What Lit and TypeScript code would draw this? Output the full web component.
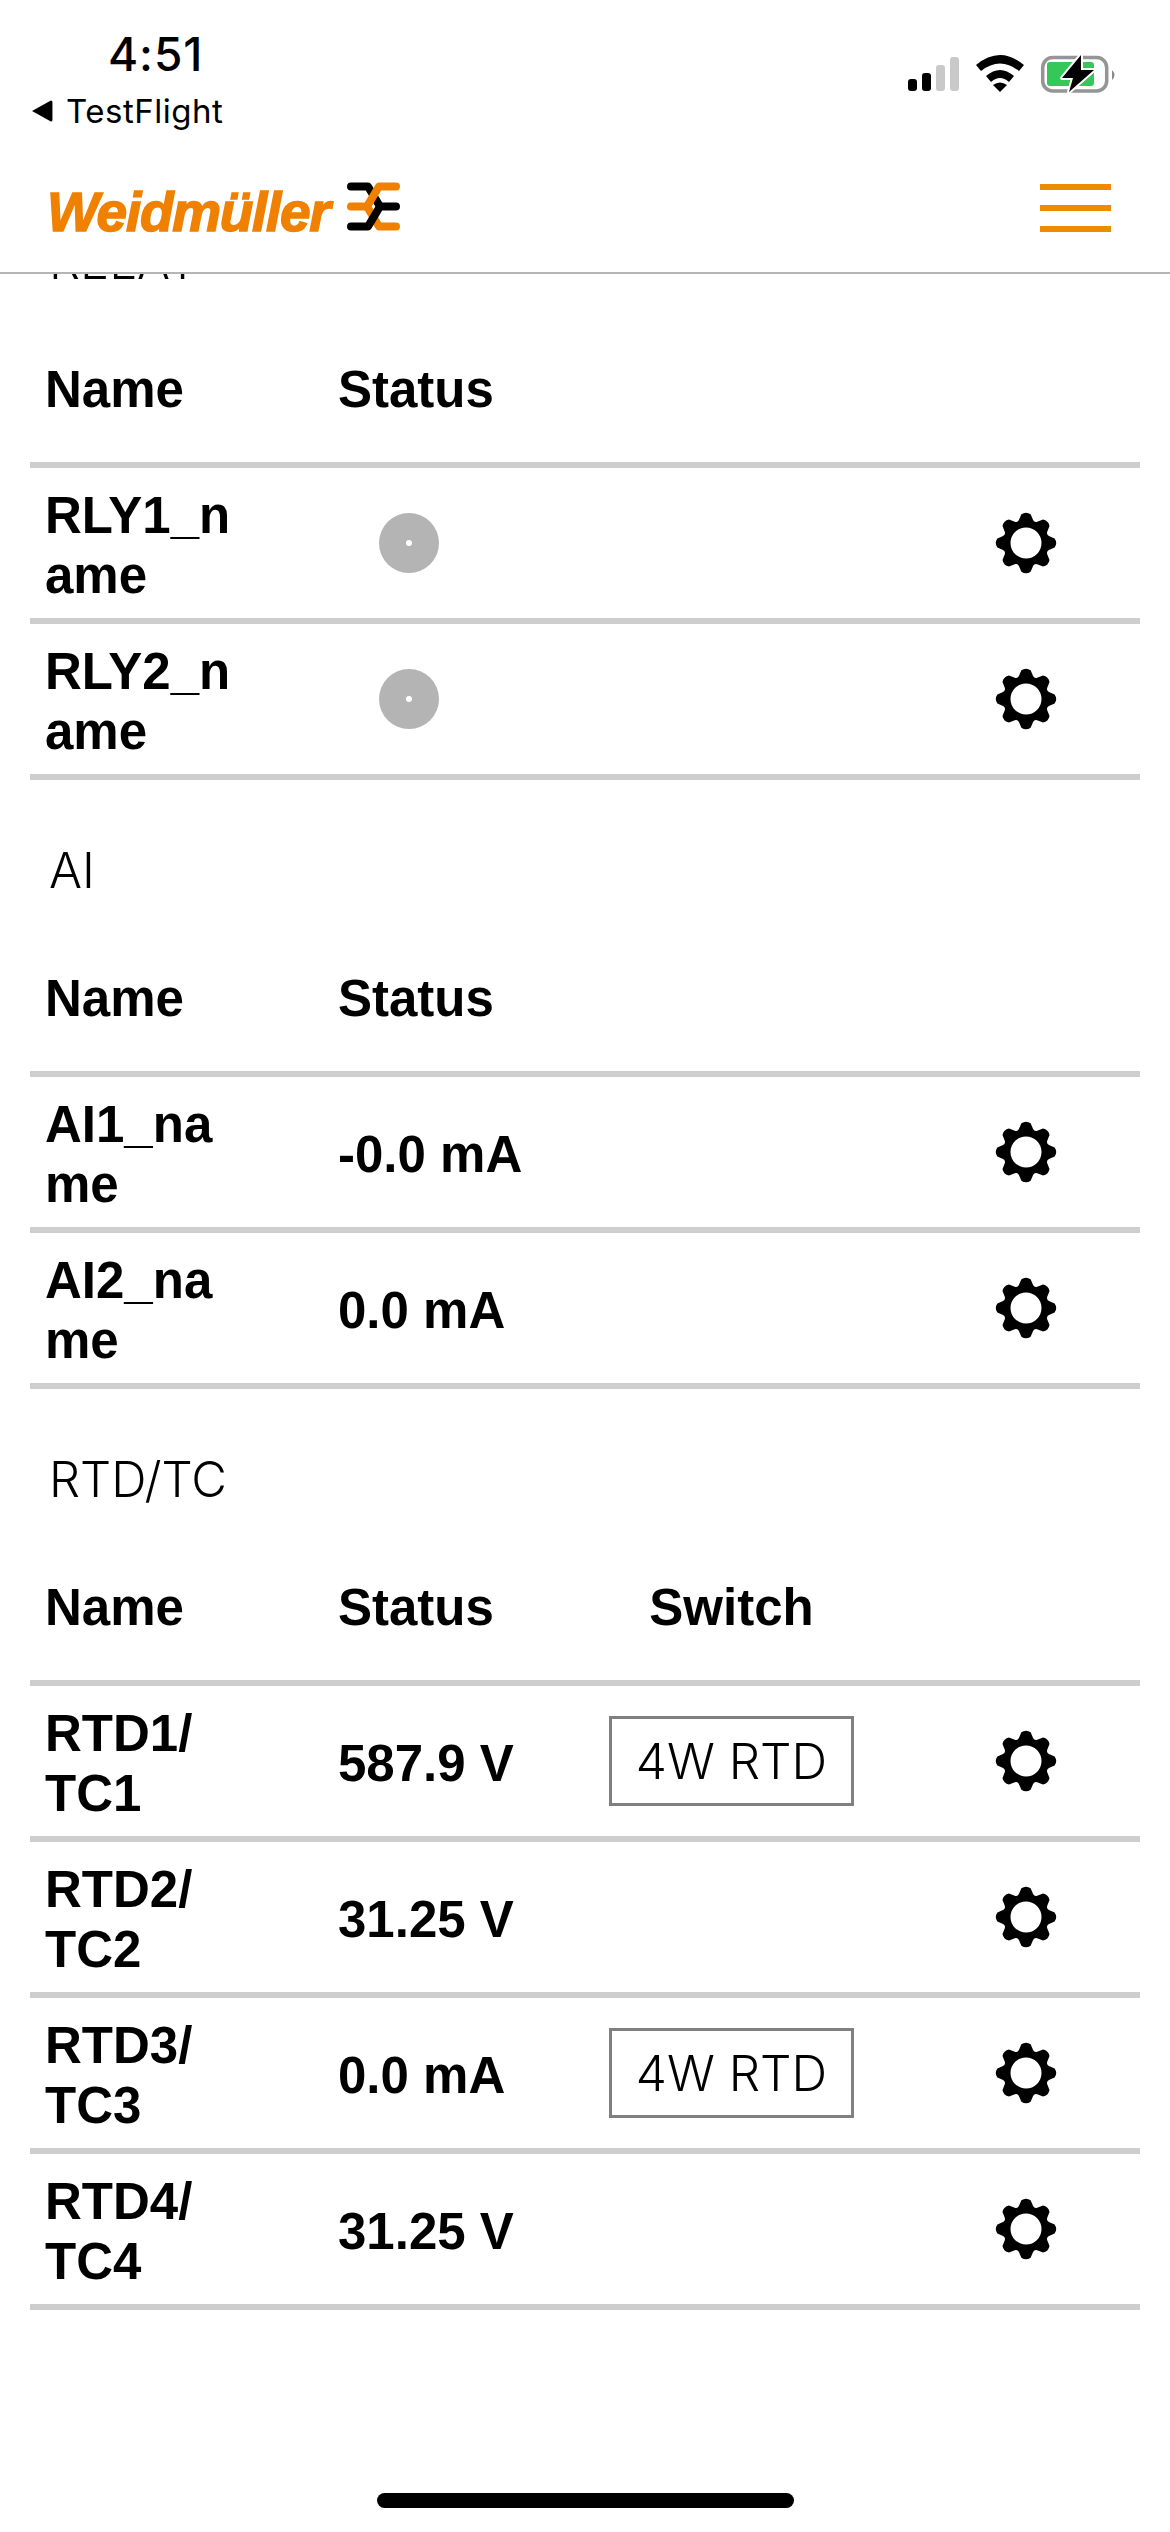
import { LitElement, html, css, svg } from "lit";
import { customElement } from "lit/decorators.js";

const gearPath = (() => {
  const cx = 32, cy = 32, pts: string[] = [];
  const n = 8;
  for (let i = 0; i < n; i++) {
    const a = (i * 2 * Math.PI) / n - Math.PI / 2;
    const p = (r: number, d: number) => {
      const x = cx + r * Math.cos(a + d);
      const y = cy + r * Math.sin(a + d);
      return `${x.toFixed(2)} ${y.toFixed(2)}`;
    };
    pts.push(`${i === 0 ? "M" : "L"}${p(24, -0.3)}`);
    pts.push(`L${p(29, -0.16)}`);
    pts.push(`Q${p(31.8, 0)} ${p(29, 0.16)}`);
    pts.push(`L${p(24, 0.3)}`);
    const b = Math.PI / n;
    pts.push(`Q${p(22, b)} ${p(24, 2 * b - 0.3)}`);
  }
  return pts.join(" ") + " Z M32 16.5 A15.5 15.5 0 1 0 32 47.5 A15.5 15.5 0 1 0 32 16.5 Z";
})();

const gear = html`<svg class="gear" viewBox="0 0 64 64"><path fill="#000" fill-rule="evenodd" d=${gearPath}></path></svg>`;

interface Row { name: string; status?: string; led?: boolean; sw?: string; }
interface Section { title: string; hasSwitch?: boolean; rows: Row[]; }

const sections: Section[] = [
  { title: "RELAY", rows: [{ name: "RLY1_name", led: true }, { name: "RLY2_name", led: true }] },
  { title: "AI", rows: [{ name: "AI1_name", status: "-0.0 mA" }, { name: "AI2_name", status: "0.0 mA" }] },
  {
    title: "RTD/TC",
    hasSwitch: true,
    rows: [
      { name: "RTD1/ TC1", status: "587.9 V", sw: "4W RTD" },
      { name: "RTD2/ TC2", status: "31.25 V" },
      { name: "RTD3/ TC3", status: "0.0 mA", sw: "4W RTD" },
      { name: "RTD4/ TC4", status: "31.25 V" },
    ],
  },
];

@customElement("app-root")
export class AppRoot extends LitElement {
  static styles = css`
    :host { display: block; width: 1170px; height: 2532px; position: relative; overflow: hidden; background: #fff; color: #000; font-family: "Liberation Sans", Arial, sans-serif; }
    .status { height: 148px; display: flex; justify-content: space-between; font-family: Inter, sans-serif; }
    .status-left { padding: 32px 0 0 32px; }
    .time { font-size: 46px; font-weight: 500; line-height: 44px; padding-left: 76px; letter-spacing: 0.9px; }
    .back { display: flex; align-items: center; gap: 13px; font-size: 33px; line-height: 40px; margin-top: 15px; letter-spacing: 0.5px; }
    .tri { width: 21px; height: 22px; display: block; }
    .status-icons { display: block; width: 220px; height: 50px; margin: 50px 49px 0 0; }
    .nav { border-bottom: 2px solid #b5b5b5; display: flex; align-items: flex-start; justify-content: space-between; box-sizing: border-box; padding: 0 59px 0 47px; height: 126px; }
    .logo { display: flex; align-items: flex-start; gap: 18px; }
    .wordmark { color: #f08000; font-size: 55px; font-weight: 700; font-style: italic; line-height: 46px; margin-top: 41px; letter-spacing: -1.3px; -webkit-text-stroke: 1.5px #f08000; }
    .mark { width: 53px; height: 49px; margin-top: 34px; display: block; }
    .burger { width: 71px; display: flex; flex-direction: column; gap: 15px; margin-top: 36px; }
    .burger i { display: block; height: 6px; background: #ee8c00; }
    .content { height: 2258px; overflow: hidden; padding: 0 30px; box-sizing: border-box; }
    .scroll { margin-top: -40px; }
    section { margin-bottom: 63px; }
    .title { font-family: Inter, sans-serif; font-weight: 350; font-size: 49px; line-height: 56px; padding-left: 19px; margin-bottom: 34px; }
    .row { display: grid; grid-template-columns: 308px 271px 245px 1fr; align-items: center; }
    .head { height: 138px; padding-bottom: 8px; box-sizing: border-box; font-weight: 700; font-size: 51px; }
    .body { height: 150px; border-top: 6px solid #cecece; font-weight: 700; font-size: 51px; line-height: 60px; }
    .body:last-child { height: 150px; border-bottom: 6px solid #cecece; }
    .head .h-name, .name { padding-left: 15px; }
    .name { width: 200px; word-break: break-all; padding-top: 6px; }
    .name.wrap { word-break: normal; }
    .value { padding-top: 6px; }
    .sw-h { text-align: center; }
    .led { width: 60px; height: 60px; border-radius: 50%; background: #b4b4b4; margin-left: 41px; display: flex; align-items: center; justify-content: center; }
    .led i { display: block; width: 6px; height: 6px; border-radius: 50%; background: #fff; }
    .sw { width: 245px; height: 90px; box-sizing: border-box; border: 3px solid #808080; font-family: Inter, sans-serif; font-weight: 350; font-size: 49.5px; display: flex; align-items: center; justify-content: center; }
    .gear-cell { display: flex; justify-content: flex-end; padding-right: 82px; }
    .gear { width: 64px; height: 64px; display: block; }
    .home { position: absolute; left: 377px; top: 2493px; width: 417px; height: 15px; border-radius: 7.5px; background: #000; }
  `;

  private statusIcons() {
    return html`<svg class="status-icons" viewBox="0 0 220 50">
      ${svg`
      <rect x="7" y="29" width="9" height="12" rx="3" fill="#000"/>
      <rect x="21" y="23" width="9" height="18" rx="3" fill="#000"/>
      <rect x="35" y="15" width="9" height="26" rx="3" fill="#c9c9c9"/>
      <rect x="49" y="7" width="9" height="34" rx="3" fill="#c9c9c9"/>
      <path d="M75 15 Q99 -5 123 15 L118 21 Q99 6 80 21 Z" fill="#000"/>
      <path d="M85 26 Q99 14 113 26 L108 32 Q99 24 90 32 Z" fill="#000"/>
      <path d="M92 35 Q99 30 106 35 L99 42 Z" fill="#000"/>
      <rect x="141.7" y="7.5" width="64" height="33.5" rx="10" fill="none" stroke="#959595" stroke-width="3.5"/>
      <rect x="146" y="12" width="47" height="24" rx="3" fill="#34c759"/>
      <path d="M211 20 Q216 25 211 30 Z" fill="#8a8a8a"/>
      <path d="M180 5 L161 28 L172 28 L168 42 L193 20 L180 20 Z" fill="#000" stroke="#fff" stroke-width="4" paint-order="stroke" stroke-linejoin="round"/>
      `}
    </svg>`;
  }

  private renderRow(r: Row) {
    return html`<div class="row body">
      <div class="name ${r.name.includes(" ") ? "wrap" : ""}">${r.name}</div>
      ${r.led ? html`<div><div class="led"><i></i></div></div>` : html`<div class="value">${r.status}</div>`}
      <div>${r.sw ? html`<div class="sw">${r.sw}</div>` : ""}</div>
      <div class="gear-cell">${gear}</div>
    </div>`;
  }

  render() {
    return html`
      <div class="status">
        <div class="status-left">
          <div class="time">4:51</div>
          <div class="back">
            <svg class="tri" viewBox="0 0 20 21"><path d="M0 10.5 L18 0.5 Q19.5 0.5 19.5 2 L19.5 19 Q19.5 20.5 18 20.5 Z" fill="#000"></path></svg>
            <span>TestFlight</span>
          </div>
        </div>
        ${this.statusIcons()}
      </div>
      <header class="nav">
        <div class="logo">
          <span class="wordmark">Weidmüller</span>
          <svg class="mark" viewBox="0 0 53 49" fill="none" stroke-width="8" stroke-linecap="round" stroke-linejoin="round">
            <path d="M4 4.5 H21 L33 24.5 H49" stroke="#000"></path>
            <path d="M49 44.5 H32 L20 24.5" stroke="#f08000"></path>
            <path d="M49 4.5 H32 L20 24.5 H4" stroke="#f08000"></path>
            <path d="M4 44.5 H21 L33 24.5" stroke="#000"></path>
          </svg>
        </div>
        <div class="burger"><i></i><i></i><i></i></div>
      </header>
      <main class="content">
        <div class="scroll">
          ${sections.map(
            (s) => html`<section>
              <div class="title">${s.title}</div>
              <div class="row head">
                <div class="h-name">Name</div>
                <div>Status</div>
                <div class="sw-h">${s.hasSwitch ? "Switch" : ""}</div>
                <div></div>
              </div>
              ${s.rows.map((r) => this.renderRow(r))}
            </section>`
          )}
        </div>
      </main>
      <div class="home"></div>
    `;
  }
}
